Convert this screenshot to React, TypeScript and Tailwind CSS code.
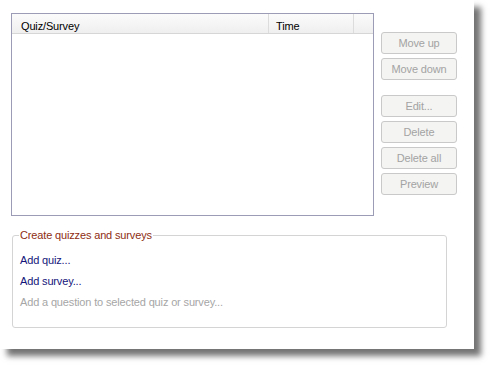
import React from "react";

const btn =
  "w-[76px] h-[22px] rounded-[3px] border border-[#c9c9c9] bg-[#f4f4f2] text-[#a3a3a3] text-[11px] leading-none flex items-center justify-center";

export default function App() {
  return (
    <div
      className="w-[491px] h-[367px] bg-white overflow-hidden tracking-[-0.15px]"
      style={{ fontFamily: '"Liberation Sans", Arial, sans-serif' }}
    >
      <div className="w-[474px] h-[349px] bg-white shadow-[7px_7px_6px_rgba(0,0,0,0.55)] pt-[13px] pl-[11px]">
        <div className="flex">
          <div className="w-[363px] h-[203px] border border-[#9c9cb6] bg-white flex flex-col">
            <div className="h-[20px] flex bg-gradient-to-b from-[#fbfbfb] to-[#efefef] border-b border-[#d6d6d6] text-[11px] text-black">
              <div className="w-[257px] pl-[9px] pt-[4px] border-r border-[#dcdcdc]">Quiz/Survey</div>
              <div className="w-[85px] pl-[7px] pt-[4px] border-r border-[#dcdcdc]">Time</div>
              <div className="flex-1" />
            </div>
          </div>
          <div className="ml-[7px] pt-[19px] flex flex-col gap-[4px]">
            <div className={btn}>Move up</div>
            <div className={btn}>Move down</div>
            <div className="h-[7px]" />
            <div className={btn}>Edit...</div>
            <div className={btn}>Delete</div>
            <div className={btn}>Delete all</div>
            <div className={btn}>Preview</div>
          </div>
        </div>
        <fieldset className="mt-[13px] ml-[1px] w-[435px] h-[99px] border border-[#d4d4d4] rounded-[3px] px-[7px]">
          <legend className="ml-[-1px] px-[1px] text-[11px] text-[#8e2d12] leading-[13px]">
            Create quizzes and surveys
          </legend>
          <div className="flex flex-col text-[11px] leading-[13px] pt-[12px] gap-[8px]">
            <div className="text-[#14147a]">Add quiz...</div>
            <div className="text-[#14147a]">Add survey...</div>
            <div className="text-[#a6a6a6]">Add a question to selected quiz or survey...</div>
          </div>
        </fieldset>
      </div>
    </div>
  );
}
